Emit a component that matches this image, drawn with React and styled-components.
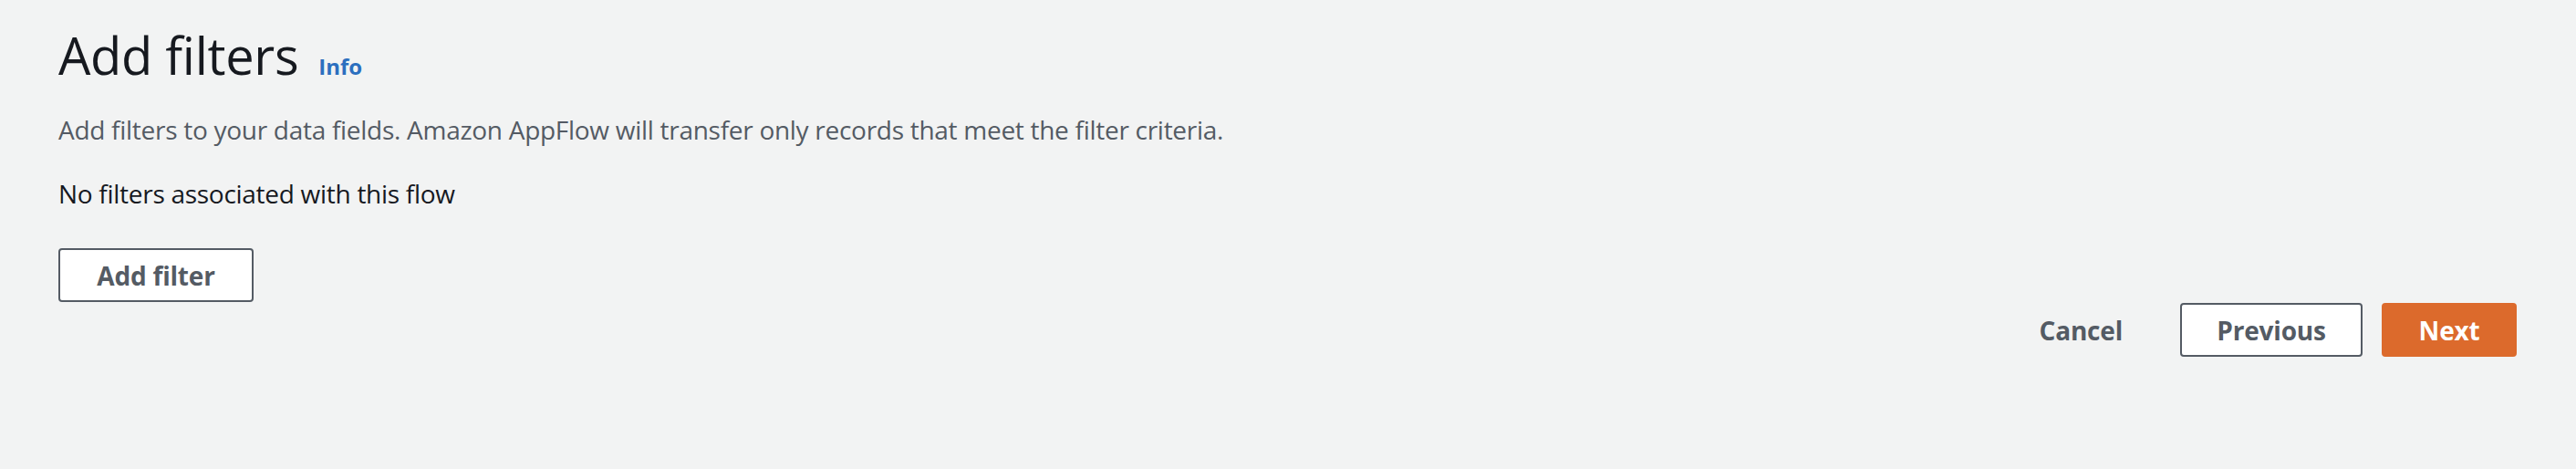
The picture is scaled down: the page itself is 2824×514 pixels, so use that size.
import React from 'react';
import styled, { createGlobalStyle } from 'styled-components';

const GlobalStyle = createGlobalStyle`
  html, body {
    margin: 0;
    padding: 0;
    background: #f2f3f3;
  }
  body {
    font-family: 'Open Sans', 'Noto Sans', sans-serif;
    -webkit-font-smoothing: antialiased;
  }
`;

const App = () => {
  return (
    <Page>
      <GlobalStyle />
      <Section>
        <Header>
          <Title>Add filters</Title>
          <InfoLink href="#">Info</InfoLink>
        </Header>
        <Description>
          Add filters to your data fields. Amazon AppFlow will transfer only records that meet the filter criteria.
        </Description>
        <EmptyText>No filters associated with this flow</EmptyText>
        <AddButton $width="214px">Add filter</AddButton>
      </Section>
      <Footer>
        <LinkButton>Cancel</LinkButton>
        <Button $width="200px">Previous</Button>
        <Button $primary $width="148px">Next</Button>
      </Footer>
    </Page>
  );
};

export default App;

const Page = styled.div`
  display: flex;
  flex-direction: column;
  height: 514px;
  box-sizing: border-box;
  padding: 24px 65px 0 64px;
  background: #f2f3f3;
`;

const Section = styled.div`
  display: flex;
  flex-direction: column;
  align-items: flex-start;
`;

const Header = styled.div`
  display: flex;
  flex-direction: row;
  align-items: baseline;
  gap: 22px;
`;

const Title = styled.h1`
  margin: 0;
  font-size: 56px;
  line-height: 72px;
  font-weight: 400;
  color: #16191f;
  letter-spacing: -0.3px;
`;

const InfoLink = styled.a`
  font-size: 24px;
  font-weight: 700;
  color: #2c6fbf;
  text-decoration: none;
`;

const Description = styled.p`
  margin: 26px 0 0;
  font-size: 28px;
  line-height: 40px;
  color: #545b64;
  letter-spacing: -0.28px;
`;

const EmptyText = styled.p`
  margin: 30px 0 0;
  font-size: 28px;
  line-height: 40px;
  color: #16191f;
  letter-spacing: -0.28px;
`;

const Button = styled.button`
  display: flex;
  justify-content: center;
  align-items: center;
  box-sizing: border-box;
  width: ${(p) => p.$width || 'auto'};
  height: 59px;
  padding: 0 24px;
  border: 2px solid ${(p) => (p.$primary ? '#dc6a2c' : '#545b64')};
  border-radius: 4px;
  background: ${(p) => (p.$primary ? '#dc6a2c' : '#ffffff')};
  color: ${(p) => (p.$primary ? '#ffffff' : '#545b64')};
  font-family: 'Open Sans', 'Noto Sans', sans-serif;
  font-size: 28px;
  font-weight: 700;
  letter-spacing: -0.2px;
  cursor: pointer;
`;

const AddButton = styled(Button)`
  margin-top: 40px;
`;

const LinkButton = styled.button`
  display: flex;
  align-items: center;
  height: 59px;
  padding: 0 42px;
  border: none;
  background: transparent;
  color: #545b64;
  font-family: 'Open Sans', 'Noto Sans', sans-serif;
  font-size: 28px;
  font-weight: 700;
  letter-spacing: -0.2px;
  cursor: pointer;
`;

const Footer = styled.div`
  display: flex;
  flex-direction: row;
  justify-content: flex-end;
  align-items: center;
  gap: 21px;
  margin-top: 1px;
`;
